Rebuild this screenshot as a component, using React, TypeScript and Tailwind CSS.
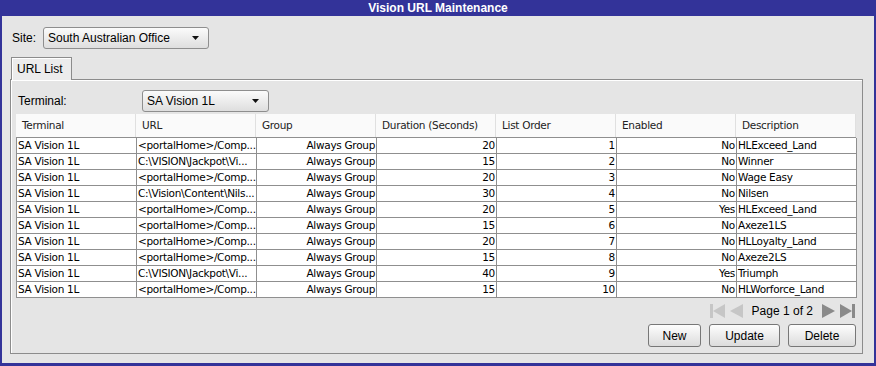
import React from "react";

const rows: string[][] = [
  ["SA Vision 1L", "<portalHome>/Comp...", "Always Group", "20", "1", "No", "HLExceed_Land"],
  ["SA Vision 1L", "C:\\VISION\\Jackpot\\Vi...", "Always Group", "15", "2", "No", "Winner"],
  ["SA Vision 1L", "<portalHome>/Comp...", "Always Group", "20", "3", "No", "Wage Easy"],
  ["SA Vision 1L", "C:\\Vision\\Content\\Nils...", "Always Group", "30", "4", "No", "Nilsen"],
  ["SA Vision 1L", "<portalHome>/Comp...", "Always Group", "20", "5", "Yes", "HLExceed_Land"],
  ["SA Vision 1L", "<portalHome>/Comp...", "Always Group", "15", "6", "No", "Axeze1LS"],
  ["SA Vision 1L", "<portalHome>/Comp...", "Always Group", "20", "7", "No", "HLLoyalty_Land"],
  ["SA Vision 1L", "<portalHome>/Comp...", "Always Group", "15", "8", "No", "Axeze2LS"],
  ["SA Vision 1L", "C:\\VISION\\Jackpot\\Vi...", "Always Group", "40", "9", "Yes", "Triumph"],
  ["SA Vision 1L", "<portalHome>/Comp...", "Always Group", "15", "10", "No", "HLWorforce_Land"],
];

const headers = ["Terminal", "URL", "Group", "Duration (Seconds)", "List Order", "Enabled", "Description"];
const rightAligned = [false, false, true, true, true, true, false];

const Combo = ({ label, width }: { label: string; width: string }) => (
  <div
    className={`${width} flex h-[22px] items-center justify-between rounded-[3px] border border-[#8e8e8e] bg-gradient-to-b from-[#fbfbfb] to-[#dedede] pl-[4px] pr-[9px] text-[12px] text-black`}
  >
    <span>{label}</span>
    <svg width="7" height="4" viewBox="0 0 7 4">
      <path d="M0 0h7L3.5 4z" fill="#111" />
    </svg>
  </div>
);

const Button = ({ label, width }: { label: string; width: string }) => (
  <button
    className={`${width} h-[23px] rounded-[3px] border border-[#777] bg-gradient-to-b from-[#fdfdfd] to-[#dcdcdc] text-[12px] text-black`}
  >
    {label}
  </button>
);

const PageIcon = ({ kind, on }: { kind: "first" | "prev" | "next" | "last"; on: boolean }) => {
  const fill = on ? "#8a8a8a" : "#c6c6c6";
  return (
    <svg width="15" height="14" viewBox="0 0 15 14">
      {kind === "first" && (
        <>
          <rect x="0" y="0" width="3" height="14" fill={fill} />
          <path d="M15 0v14L3 7z" fill={fill} />
        </>
      )}
      {kind === "prev" && <path d="M14 0v14L1 7z" fill={fill} />}
      {kind === "next" && <path d="M1 0v14l13-7z" fill={fill} />}
      {kind === "last" && (
        <>
          <path d="M0 0v14l12-7z" fill={fill} />
          <rect x="12" y="0" width="3" height="14" fill={fill} />
        </>
      )}
    </svg>
  );
};

export default function App() {
  return (
    <div className="flex h-[366px] w-[876px] flex-col bg-[#333399] font-['Liberation_Sans',Arial,sans-serif]">
      <div className="flex h-[16px] items-center justify-center text-[12px] font-bold leading-none text-white">
        Vision URL Maintenance
      </div>
      <div className="mx-[2px] mb-[3px] flex flex-1 flex-col bg-[#e5e5e5] pl-[8px]">
        {/* site selector */}
        <div className="mt-[11px] flex items-center">
          <span className="w-[33px] pl-[2px] text-[12px] text-black">Site:</span>
          <Combo label="South Australian Office" width="w-[166px]" />
        </div>

        {/* tab */}
        <div className="mt-[8px] flex">
          <div className="relative z-10 -mb-px ml-[1px] flex h-[23px] w-[61px] items-center border border-b-0 border-[#8c8c8c] bg-[#ececec] pl-[5px] text-[12px] text-black shadow-[inset_1px_1px_0_#fff]">
            URL List
          </div>
        </div>

        {/* tab panel */}
        <div className="flex h-[275px] w-[853px] flex-col border border-[#8c8c8c] bg-[#e5e5e5] px-[5px] shadow-[inset_1px_1px_0_#fff]">
          <div className="mt-[10px] flex items-center">
            <span className="w-[126px] pl-[2px] text-[12px] text-black">Terminal:</span>
            <Combo label="SA Vision 1L" width="w-[127px]" />
          </div>

          {/* table */}
          <div className="mt-[2px] w-[840px] font-['DejaVu_Sans',Tahoma,sans-serif] text-[10.5px] tracking-[-0.3px] text-black">
            <div className="grid h-[23px] grid-cols-[repeat(7,120px)] bg-[#fafafa]">
              {headers.map((h) => (
                <div key={h} className="flex items-center border-r border-[#e0e0e0] pl-[6px] text-[#222]">
                  {h}
                </div>
              ))}
            </div>
            <div className="border-l border-t border-[#8f8f8f] bg-white">
              {rows.map((r, i) => (
                <div key={i} className="grid h-[16px] grid-cols-[repeat(7,120px)]">
                  {r.map((c, j) => (
                    <div
                      key={j}
                      className={`flex items-center overflow-hidden whitespace-nowrap border-b border-r border-[#8f8f8f] px-[1px] ${
                        rightAligned[j] ? "justify-end" : "justify-start"
                      }`}
                    >
                      {c}
                    </div>
                  ))}
                </div>
              ))}
            </div>
          </div>

          {/* pager */}
          <div className="mt-[5px] flex h-[16px] items-center justify-end gap-[4px] pr-[2px] text-[12px] text-black">
            <PageIcon kind="first" on={false} />
            <PageIcon kind="prev" on={false} />
            <span className="px-[4px]">Page 1 of 2</span>
            <PageIcon kind="next" on={true} />
            <PageIcon kind="last" on={true} />
          </div>

          {/* actions */}
          <div className="mt-[5px] flex justify-end gap-[8px] pr-[1px]">
            <Button label="New" width="w-[53px]" />
            <Button label="Update" width="w-[71px]" />
            <Button label="Delete" width="w-[68px]" />
          </div>
        </div>
      </div>
    </div>
  );
}
